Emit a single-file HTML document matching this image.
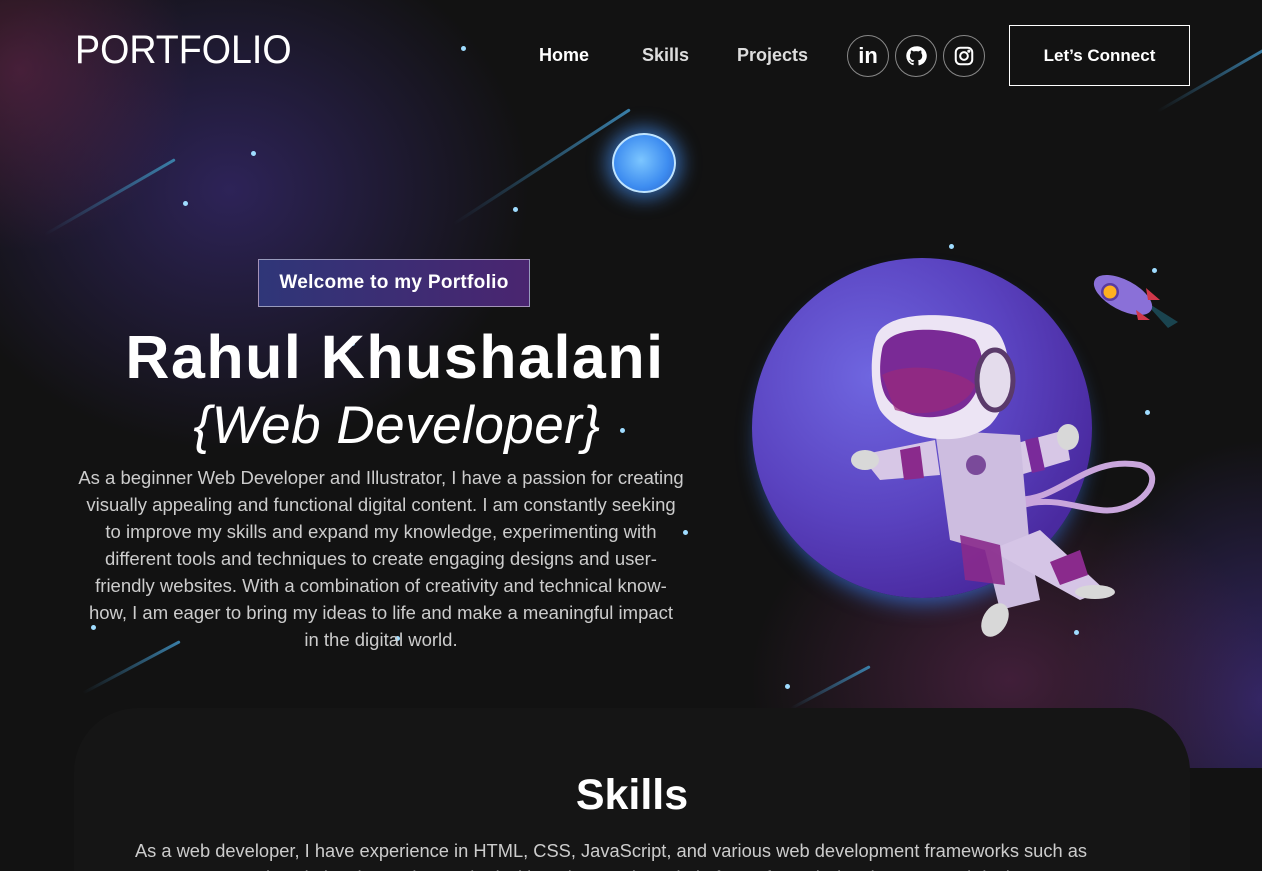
<!DOCTYPE html>
<html><head><meta charset="utf-8"><style>
*{margin:0;padding:0;box-sizing:border-box}
html,body{width:1262px;height:871px;overflow:hidden}
body{background:#121212;font-family:"Liberation Sans",sans-serif;color:#fff;position:relative}
.banner{position:absolute;left:0;top:0;width:1262px;height:768px;background:
radial-gradient(ellipse 170px 180px at 20px 70px,rgba(110,40,80,.55),transparent),
radial-gradient(ellipse 300px 260px at 230px 190px,rgba(50,38,100,.85),transparent),
radial-gradient(ellipse 260px 200px at 1010px 680px,rgba(80,35,70,.75),transparent),
radial-gradient(ellipse 200px 260px at 1262px 700px,rgba(55,40,110,.9),transparent),
#121212}
.star{position:absolute;width:5px;height:5px;border-radius:50%;background:#9fdcff}
.streak{position:absolute;height:3px;background:linear-gradient(90deg,transparent,#3a7fa8);border-radius:2px;transform-origin:right center}
.logo{position:absolute;left:75px;top:28px;font-size:40px;font-weight:400;transform:scaleX(.94);transform-origin:left}
.nav a{position:absolute;top:45px;font-size:18px;font-weight:bold;color:#fff;text-decoration:none}
.ic{position:absolute;top:35px;width:42px;height:42px;border:1px solid #888;border-radius:50%;background:rgba(20,20,20,.6);display:flex;align-items:center;justify-content:center}
.btn{position:absolute;left:1009px;top:25px;width:181px;height:61px;border:1px solid #fff;display:flex;align-items:center;justify-content:center;font-weight:bold;font-size:17px}
.tag{position:absolute;left:258px;top:259px;width:272px;height:48px;border:1px solid rgba(255,255,255,.5);background:linear-gradient(90deg,#2f3678,#4a2570);font-weight:bold;font-size:19px;display:flex;align-items:center;justify-content:center;letter-spacing:.3px}
h1{position:absolute;left:0;width:790px;top:322px;text-align:center;font-size:61px;font-weight:bold;letter-spacing:1.5px}
.sub{position:absolute;left:0;width:794px;top:395px;text-align:center;font-size:53px;font-style:italic;letter-spacing:.5px}
.p{position:absolute;left:31px;width:700px;top:464px;text-align:center;font-size:18.5px;line-height:27px;color:#ccc;white-space:nowrap}
.skills{position:absolute;left:74px;top:708px;width:1116px;height:200px;background:#151515;border-radius:64px 64px 0 0}
.skills h2{text-align:center;font-size:43px;font-weight:bold;margin-top:63px}
.skills p{text-align:center;font-size:18.3px;color:#ccc;margin-top:17px;line-height:27px;white-space:nowrap;padding-right:42px}
</style></head><body>
<div class="banner">
<div class="streak" style="width:150px;transform:rotate(-30deg);left:25px;top:158px"></div>
<div class="streak" style="left:420px;top:108px;width:210px;transform:rotate(-33deg)"></div>
<div class="streak" style="left:1140px;top:45px;width:130px;transform:rotate(-30deg)"></div>
<div class="streak" style="left:780px;top:665px;width:90px;transform:rotate(-28deg)"></div>
<div class="streak" style="left:70px;top:640px;width:110px;transform:rotate(-28deg)"></div>
<div class="star" style="left:461px;top:46px"></div>
<div class="star" style="left:251px;top:151px"></div>
<div class="star" style="left:183px;top:201px"></div>
<div class="star" style="left:513px;top:207px"></div>
<div class="star" style="left:949px;top:244px"></div>
<div class="star" style="left:1152px;top:268px"></div>
<div class="star" style="left:1145px;top:410px"></div>
<div class="star" style="left:620px;top:428px"></div>
<div class="star" style="left:683px;top:530px"></div>
<div class="star" style="left:350px;top:341px"></div>
<div class="star" style="left:91px;top:625px"></div>
<div class="star" style="left:1074px;top:630px"></div>
<div class="star" style="left:785px;top:684px"></div>
<div class="star" style="left:395px;top:636px"></div>
<div style="position:absolute;left:612px;top:133px;width:64px;height:60px;border-radius:50%;background:radial-gradient(circle at 45% 45%,#7cc6ff,#3d8cf0 60%,#2a5fc0);box-shadow:0 0 18px 6px rgba(70,150,255,.6);border:2px solid #bfe4ff"></div>
<div style="position:absolute;left:752px;top:258px;width:340px;height:340px;border-radius:50%;background:radial-gradient(circle at 35% 35%,#6f66e0,#5a43c0 45%,#4a2aa0 75%,#3a2390);box-shadow:0 12px 20px -6px rgba(60,130,255,.6)"></div>
<svg style="position:absolute;left:1088px;top:270px" width="95" height="65" viewBox="0 0 95 65">
<path d="M55 30 L90 52 L80 58 Z" fill="#1e5a6a" opacity=".7"/>
<ellipse cx="35" cy="25" rx="32" ry="15" transform="rotate(28 35 25)" fill="#8a70d8"/>
<path d="M58 18 L72 30 L60 30Z M48 40 L62 50 L50 50Z" fill="#d0384a"/>
<circle cx="22" cy="22" r="9" fill="#5a3aa0"/><circle cx="22" cy="22" r="6.5" fill="#ffb020"/>
</svg>
<svg style="position:absolute;left:840px;top:300px" width="320" height="340" viewBox="0 0 320 340">
<path d="M100 150 C 200 260, 220 150, 300 165 C 330 175, 300 215, 260 210 C 220 205, 200 190, 150 220" fill="none" stroke="#c9a6dc" stroke-width="6"/>
<path d="M20 155 L95 140 L100 175 L40 180 Z" fill="#d7c7e6"/>
<path d="M60 150 L80 146 L84 178 L64 180Z" fill="#8a2a8c"/>
<ellipse cx="25" cy="160" rx="14" ry="10" fill="#d8d8d8"/>
<path d="M170 145 L225 130 L230 160 L180 175 Z" fill="#d7c7e6"/>
<path d="M185 140 L198 137 L205 170 L192 173Z" fill="#7a2a9a"/>
<ellipse cx="228" cy="137" rx="11" ry="13" fill="#d8d8d8"/>
<path d="M95 130 L180 135 L190 250 L200 300 L160 310 L145 250 L110 240 Z" fill="#cdbde0"/>
<path d="M150 250 L200 230 L265 290 L240 300 Z" fill="#d5c5e6"/>
<path d="M210 262 L240 250 L248 275 L220 285Z" fill="#8a2a8c"/>
<path d="M120 235 L160 245 L165 285 L125 280Z" fill="#8a2a8c" opacity=".9"/>
<ellipse cx="255" cy="292" rx="20" ry="7" fill="#d8d8d8"/>
<ellipse cx="155" cy="320" rx="12" ry="18" fill="#d8d8d8" transform="rotate(30 155 320)"/>
<circle cx="136" cy="165" r="10" fill="#7a4a9a"/>
<path d="M35 40 C 40 10, 110 10, 150 25 C 175 40, 175 100, 150 125 C 120 150, 60 140, 40 110 C 30 90, 30 60, 35 40Z" fill="#ece4f4"/>
<path d="M42 50 C 45 25, 105 25, 135 40 C 150 60, 140 100, 120 110 C 90 125, 55 115, 45 95 C 38 80, 40 60, 42 50Z" fill="#7a2a96"/>
<path d="M42 75 C 70 60, 120 70, 135 85 C 130 105, 90 120, 55 110 Z" fill="#9a2a7a" opacity=".7"/>
<ellipse cx="155" cy="80" rx="18" ry="30" fill="#e4dcec" stroke="#5a3a6a" stroke-width="5"/>
</svg>
</div>

<div class="logo">PORTFOLIO</div>
<div class="nav"><a style="left:539px">Home</a><a style="left:642px;color:#ddd">Skills</a><a style="left:737px;color:#ddd">Projects</a></div>
<div class="ic" style="left:847px"><span style="font-weight:bold;font-size:22px">in</span></div>
<div class="ic" style="left:895px"><svg width="22" height="22" viewBox="0 0 24 24"><path fill="#fff" d="M12 1.5a10.5 10.5 0 0 0-3.3 20.5c.5.1.7-.2.7-.5v-2c-2.9.6-3.5-1.2-3.5-1.2-.5-1.2-1.2-1.5-1.2-1.5-1-.6.1-.6.1-.6 1 .1 1.6 1.1 1.6 1.1.9 1.6 2.5 1.2 3.1.9.1-.7.4-1.2.7-1.4-2.3-.3-4.8-1.2-4.8-5.2 0-1.1.4-2.1 1.1-2.8-.1-.3-.5-1.4.1-2.8 0 0 .9-.3 2.9 1.1a10 10 0 0 1 5.2 0c2-1.4 2.9-1.1 2.9-1.1.6 1.4.2 2.5.1 2.8.7.7 1.1 1.7 1.1 2.8 0 4-2.5 4.9-4.8 5.2.4.3.7 1 .7 2v2.9c0 .3.2.6.7.5A10.5 10.5 0 0 0 12 1.5z"/></svg></div>
<div class="ic" style="left:943px"><svg width="22" height="22" viewBox="0 0 24 24" fill="none" stroke="#fff" stroke-width="2.2"><rect x="3" y="3" width="18" height="18" rx="5"/><circle cx="12" cy="12" r="4.2"/><circle cx="17.3" cy="6.7" r=".6" fill="#fff"/></svg></div>
<div class="btn">Let’s Connect</div>

<div class="tag">Welcome to my Portfolio</div>
<h1>Rahul Khushalani</h1>
<div class="sub">{Web Developer}</div>
<div class="p">As a beginner Web Developer and Illustrator, I have a passion for creating<br>visually appealing and functional digital content. I am constantly seeking<br>to improve my skills and expand my knowledge, experimenting with<br>different tools and techniques to create engaging designs and user-<br>friendly websites. With a combination of creativity and technical know-<br>how, I am eager to bring my ideas to life and make a meaningful impact<br>in the digital world.</div>

<div class="skills"><h2>Skills</h2><p>As a web developer, I have experience in HTML, CSS, JavaScript, and various web development frameworks such as<br>React and Node.js. I have also worked with various tools and platforms for web development and design.</p></div>
</body></html>
